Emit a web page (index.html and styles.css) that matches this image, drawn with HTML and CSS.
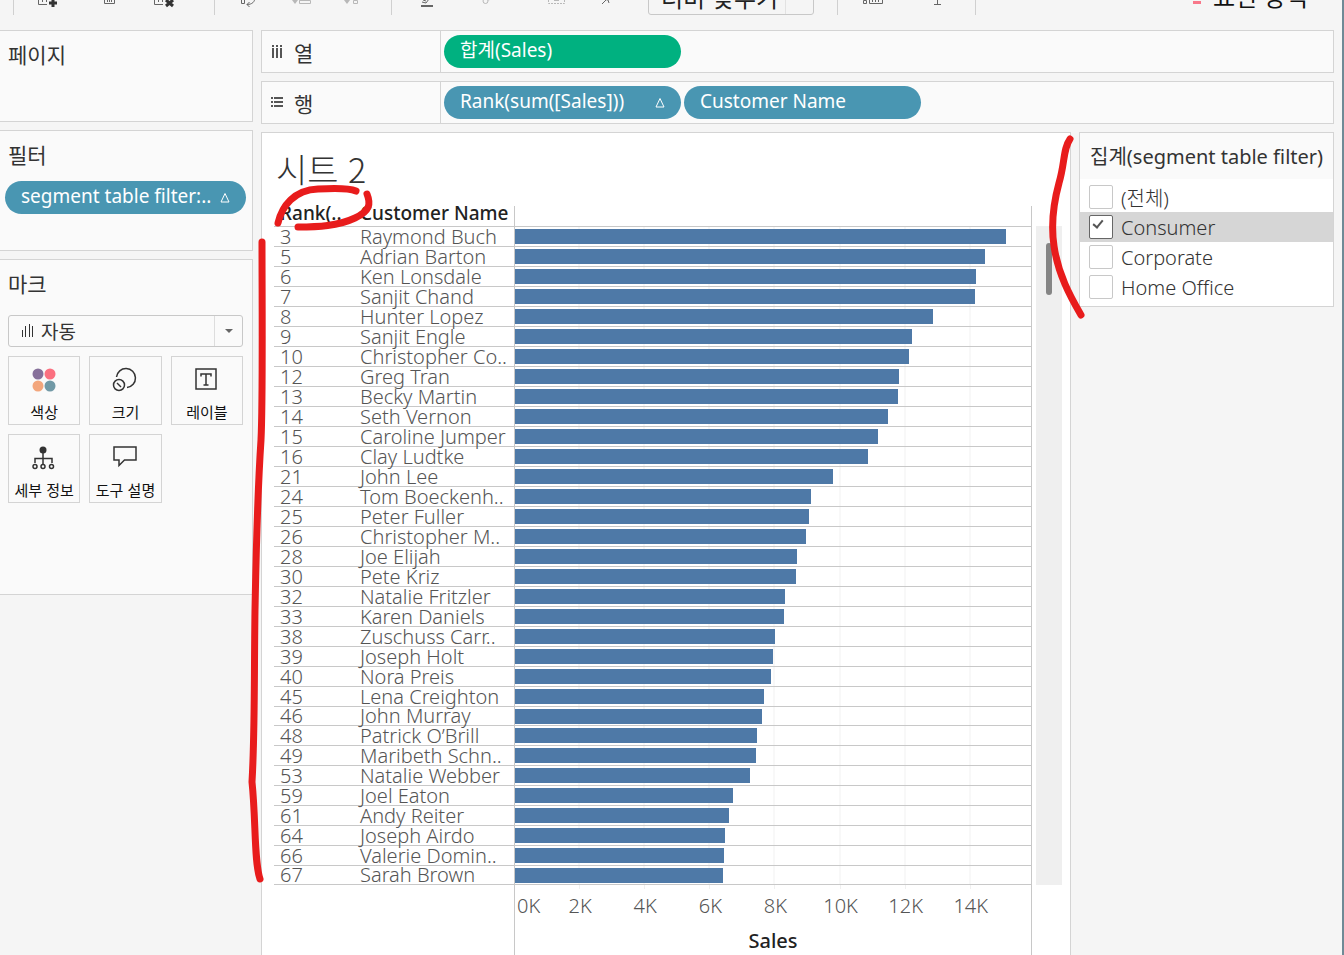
FILE: index.html
```html
<!DOCTYPE html>
<html lang="ko">
<head>
<meta charset="utf-8">
<title>시트 2</title>
<link rel="stylesheet" href="styles.css">
</head>
<body>
<header class="toolbar">
  <span class="sep"></span>
  <div class="tools tools-data">
    <button class="tool" aria-label="새 워크시트"><svg viewBox="0 0 24 24"><path d="M3.500 8v9.500h8.500M7.500 13v2M11.500 13v2" class="ln"/><path d="M18 12v8M14 16h8" class="hv"/></svg></button>
    <button class="tool" aria-label="복제"><svg viewBox="0 0 24 24"><path d="M6.500 8v8.500h10V8M9.500 11v4M11.500 10v5M13.500 11v4" class="ln"/></svg></button>
    <button class="tool" aria-label="시트 지우기"><svg viewBox="0 0 24 24"><path d="M3.500 8v9.500h8.500M7.500 13v2M11.500 13v2" class="ln"/><path d="M15 13l7 6M22 13l-7 6" class="hv"/></svg></button>
  </div>
  <span class="sep"></span>
  <div class="tools tools-sort">
    <button class="tool" aria-label="행과 열 바꾸기"><svg viewBox="0 0 24 24"><path d="M4.500 12.500h3v4h-3zM18 10c0 5-3 7.500-8 7.500M12.500 15L10 17.500l2.500 2.500" class="ln"/></svg></button>
    <button class="tool off" aria-label="오름차순 정렬"><svg viewBox="0 0 24 24"><path d="M3 13h6l-3 4z" class="fl"/><path d="M10.500 13.500h11v3h-11zM10.500 13.500v-5" class="ln"/></svg></button>
    <button class="tool off" aria-label="내림차순 정렬"><svg viewBox="0 0 24 24"><path d="M5 13h6l-3 4z" class="fl"/><path d="M14.500 13.500h4v3h-4z" class="ln"/></svg></button>
  </div>
  <span class="sep"></span>
  <div class="tools tools-view">
    <button class="tool" aria-label="하이라이트"><svg viewBox="0 0 24 24"><path d="M6 19h12" class="hv md"/><path d="M7 15l4 1 3-4M8 13l3 1" class="ln"/></svg></button>
    <button class="tool off" aria-label="그룹"><svg viewBox="0 0 24 24"><circle cx="10.500" cy="14" r="2.500" class="ln"/><path d="M13 13l4-1" class="ln"/></svg></button>
    <button class="tool off" aria-label="레이블 표시"><svg viewBox="0 0 24 24"><path d="M4.500 10v6.500h16V10" class="ln" stroke-dasharray="2 1"/><path d="M10 13.500h5" class="ln"/></svg></button>
    <button class="tool" aria-label="축 고정"><svg viewBox="0 0 24 24"><path d="M8 17l4-4M9 12l5 1M14 13l1 3" class="ln"/></svg></button>
  </div>
  <select class="fit" aria-label="맞춤"><option>너비 맞추기</option></select>
  <span class="sep"></span>
  <div class="tools tools-show">
    <button class="tool" aria-label="카드 표시"><svg viewBox="0 0 24 24"><path d="M2.500 13.500h3v3h-3zM8.500 10v6.500h13V10M11.500 12v3M14.500 11v4M17.500 12v3" class="ln"/></svg></button>
    <button class="tool" aria-label="프레젠테이션"><svg viewBox="0 0 24 24"><path d="M12.500 9v8.500M9 17.500h7" class="ln"/></svg></button>
  </div>
  <span class="sep"></span>
  <button class="showme"><svg viewBox="0 0 8 24"><path d="M0 17h8v3H0z" fill="#f8788a"/></svg>표현 방식</button>
</header>

<div class="workspace">
  <aside class="side">
    <section class="card pages"><h2>페이지</h2></section>
    <section class="card filters">
      <h2>필터</h2>
      <button class="pill">segment table filter:..<svg class="delta" viewBox="0 0 10 11"><path d="M5 1.500L9 10H1z"/></svg></button>
    </section>
    <section class="card marks">
      <h2>마크</h2>
      <div class="marktype">
        <svg viewBox="0 0 12 13"><path d="M.5 6v7M3.500 2v11M7.500 0v13M10.500 2v11"/></svg>
        <select aria-label="마크 유형"><option>자동</option></select>
      </div>
      <div class="markgrid">
        <button class="mark"><svg viewBox="0 0 28 28"><circle cx="8" cy="9" r="5.500" fill="#86709a"/><circle cx="20" cy="9" r="5.500" fill="#fb7080"/><circle cx="8" cy="21" r="5.500" fill="#f3a67c"/><circle cx="20" cy="21" r="5.500" fill="#7199a6"/></svg>색상</button>
        <button class="mark"><svg viewBox="0 0 28 28"><g class="st"><path d="M5.500 12A9.500 9.500 0 1 1 16 22.500"/><circle cx="8" cy="20" r="5.500"/><path d="M6 18l4 4"/></g></svg>크기</button>
        <button class="mark"><svg viewBox="0 0 28 28"><g class="st"><rect x="3" y="4" width="20" height="20"/><path d="M8 11.500V9h10v2.500M13 9v11M10.500 20h5"/></g></svg>레이블</button>
        <button class="mark"><svg viewBox="0 0 28 28"><circle cx="13" cy="7" r="3.500" fill="#333"/><g class="st"><path d="M13 10v11M5 20v-4.500h17V20"/><circle cx="5" cy="23.500" r="2"/><circle cx="13" cy="23.500" r="2"/><circle cx="21.500" cy="23.500" r="2"/></g></svg>세부 정보</button>
        <button class="mark"><svg viewBox="0 0 28 28"><path class="st" d="M3 4h22v13H13.500L8 22.500V17H3z"/></svg>도구 설명</button>
      </div>
    </section>
  </aside>

  <main class="main">
    <section class="shelf">
      <h2><svg viewBox="0 0 12 13"><path d="M2 0v2M6 0v2M10 0v2M2 3v10M6 3v10M10 3v10"/></svg>열</h2>
      <button class="pill green">합계(Sales)</button>
    </section>
    <section class="shelf">
      <h2><svg viewBox="0 0 12 13"><path d="M0 2h2M0 6h2M0 10h2M3 2h9M3 6h9M3 10h9"/></svg>행</h2>
      <button class="pill">Rank(sum([Sales]))<svg class="delta" viewBox="0 0 10 11"><path d="M5 1.500L9 10H1z"/></svg></button>
      <button class="pill">Customer Name</button>
    </section>

    <div class="content">
      <section class="view">
        <h1>시트 2</h1>
        <div class="chart">
          <table class="ranks">
            <colgroup><col class="c-rank"><col class="c-name"><col></colgroup>
            <thead><tr><th>Rank(..</th><th>Customer Name</th><th class="plot"></th></tr></thead>
            <tbody>
            <tr><td>3</td><td>Raymond Buch</td><td class="plot"><div class="bar" style="width:95.2%"></div></td></tr>
            <tr><td>5</td><td>Adrian Barton</td><td class="plot"><div class="bar" style="width:91.1%"></div></td></tr>
            <tr><td>6</td><td>Ken Lonsdale</td><td class="plot"><div class="bar" style="width:89.3%"></div></td></tr>
            <tr><td>7</td><td>Sanjit Chand</td><td class="plot"><div class="bar" style="width:89.1%"></div></td></tr>
            <tr><td>8</td><td>Hunter Lopez</td><td class="plot"><div class="bar" style="width:81%"></div></td></tr>
            <tr><td>9</td><td>Sanjit Engle</td><td class="plot"><div class="bar" style="width:76.9%"></div></td></tr>
            <tr><td>10</td><td>Christopher Co..</td><td class="plot"><div class="bar" style="width:76.4%"></div></td></tr>
            <tr><td>12</td><td>Greg Tran</td><td class="plot"><div class="bar" style="width:74.4%"></div></td></tr>
            <tr><td>13</td><td>Becky Martin</td><td class="plot"><div class="bar" style="width:74.2%"></div></td></tr>
            <tr><td>14</td><td>Seth Vernon</td><td class="plot"><div class="bar" style="width:72.3%"></div></td></tr>
            <tr><td>15</td><td>Caroline Jumper</td><td class="plot"><div class="bar" style="width:70.3%"></div></td></tr>
            <tr><td>16</td><td>Clay Ludtke</td><td class="plot"><div class="bar" style="width:68.4%"></div></td></tr>
            <tr><td>21</td><td>John Lee</td><td class="plot"><div class="bar" style="width:61.6%"></div></td></tr>
            <tr><td>24</td><td>Tom Boeckenh..</td><td class="plot"><div class="bar" style="width:57.4%"></div></td></tr>
            <tr><td>25</td><td>Peter Fuller</td><td class="plot"><div class="bar" style="width:57%"></div></td></tr>
            <tr><td>26</td><td>Christopher M..</td><td class="plot"><div class="bar" style="width:56.4%"></div></td></tr>
            <tr><td>28</td><td>Joe Elijah</td><td class="plot"><div class="bar" style="width:54.7%"></div></td></tr>
            <tr><td>30</td><td>Pete Kriz</td><td class="plot"><div class="bar" style="width:54.5%"></div></td></tr>
            <tr><td>32</td><td>Natalie Fritzler</td><td class="plot"><div class="bar" style="width:52.3%"></div></td></tr>
            <tr><td>33</td><td>Karen Daniels</td><td class="plot"><div class="bar" style="width:52.1%"></div></td></tr>
            <tr><td>38</td><td>Zuschuss Carr..</td><td class="plot"><div class="bar" style="width:50.4%"></div></td></tr>
            <tr><td>39</td><td>Joseph Holt</td><td class="plot"><div class="bar" style="width:50%"></div></td></tr>
            <tr><td>40</td><td>Nora Preis</td><td class="plot"><div class="bar" style="width:49.6%"></div></td></tr>
            <tr><td>45</td><td>Lena Creighton</td><td class="plot"><div class="bar" style="width:48.3%"></div></td></tr>
            <tr class="short"><td>46</td><td>John Murray</td><td class="plot"><div class="bar" style="width:47.9%"></div></td></tr>
            <tr><td>48</td><td>Patrick O’Brill</td><td class="plot"><div class="bar" style="width:46.9%"></div></td></tr>
            <tr><td>49</td><td>Maribeth Schn..</td><td class="plot"><div class="bar" style="width:46.7%"></div></td></tr>
            <tr><td>53</td><td>Natalie Webber</td><td class="plot"><div class="bar" style="width:45.5%"></div></td></tr>
            <tr><td>59</td><td>Joel Eaton</td><td class="plot"><div class="bar" style="width:42.4%"></div></td></tr>
            <tr><td>61</td><td>Andy Reiter</td><td class="plot"><div class="bar" style="width:41.5%"></div></td></tr>
            <tr><td>64</td><td>Joseph Airdo</td><td class="plot"><div class="bar" style="width:40.7%"></div></td></tr>
            <tr><td>66</td><td>Valerie Domin..</td><td class="plot"><div class="bar" style="width:40.5%"></div></td></tr>
            <tr class="short"><td>67</td><td>Sarah Brown</td><td class="plot"><div class="bar" style="width:40.3%"></div></td></tr>
            </tbody>
          </table>
          <div class="scroll"><div class="thumb"></div></div>
          <div class="axis">
            <div class="ticks"></div>
            <div class="labels"><span>0K</span><span>2K</span><span>4K</span><span>6K</span><span>8K</span><span>10K</span><span>12K</span><span>14K</span></div>
            <div class="title">Sales</div>
          </div>
        </div>
      </section>

      <fieldset class="legend">
        <legend>집계(segment table filter)</legend>
        <label><input type="checkbox">(전체)</label>
        <label class="on"><input type="checkbox" checked>Consumer</label>
        <label><input type="checkbox">Corporate</label>
        <label><input type="checkbox">Home Office</label>
      </fieldset>
    </div>
  </main>
</div>

<svg class="ink" width="1100" height="900" viewBox="0 0 1100 900" aria-hidden="true">
  <path d="M278 223C282 206 294 190 318 189C334 188 349 188 356 191"/>
  <path d="M367 194C371 204 370 211 355 218C338 226 318 227 298 227"/>
  <path d="M262 242C262 300 263 400 261 440C257 500 256 560 255 610C254 680 255 730 252 782C256 820 254 862 260 879"/>
  <path d="M1070 139C1063 149 1065 163 1059 183C1053 205 1051 226 1054 246C1058 274 1070 296 1081 315"/>
</svg>
</body>
</html>
```
FILE: styles.css
```css
* { box-sizing: border-box; }
body {
  margin: 0;
  min-height: 100vh;
  display: flex;
  flex-direction: column;
  position: relative;
  background: #f5f5f5;
  border-right: 2px solid #6f8a96;
  color: #333;
  font-family: "Noto Sans", "Noto Sans CJK KR", sans-serif;
  font-size: 20px;
}
h1, h2 { margin: 0; font-weight: 400; }
button, select { font: inherit; color: inherit; padding: 0; margin: 0; background: none; border: 0; }
select { appearance: none; border: 1px solid #c8c8c8; border-radius: 3px; }

/* toolbar */
.toolbar {
  height: 30px;
  overflow: hidden;
  display: flex;
  align-items: flex-end;
  padding: 0 34px 15px 13px;
  font-family: "Noto Sans CJK KR", sans-serif;
  font-size: 24px;
}
.sep { width: 1px; height: 32px; background: #d0d0d0; flex: none; }
.tools { display: grid; padding-bottom: 4px; }
.tools-data { grid-template-columns: 63px 53px 24px; margin: 0 39px 0 21px; }
.tools-sort { grid-template-columns: 52px 50px 24px; margin: 0 28px 0 22px; }
.tools-view { grid-template-columns: 60px 69px 50px 24px; margin: 0 30px 0 23px; }
.tools-show { grid-template-columns: 64px 24px; margin: 0 26px 0 23px; }
.tool { width: 24px; height: 24px; color: #666; }
.tool.off { color: #b8b8b8; }
.tool svg { display: block; width: 24px; height: 24px; }
.ln { fill: none; stroke: currentColor; }
.fl { fill: currentColor; }
.hv { fill: none; stroke: #333; stroke-width: 3; }
.md { stroke: #666; stroke-width: 2; }
.fit {
  width: 166px;
  height: 36px;
  line-height: 34px;
  padding-left: 12px;
  margin-right: 23px;
  color: #222;
  background: linear-gradient(#e2e2e2, #e2e2e2) 136px 0 / 1px 100% no-repeat;
}
.showme { margin-left: auto; padding-bottom: 3px; line-height: 32px; display: flex; align-items: center; gap: 12px; color: #111; }
.showme svg { width: 8px; height: 24px; }

/* layout */
.workspace { flex: 1; display: grid; grid-template-columns: 253px minmax(0, 1fr); gap: 8px; padding-right: 8px; }
.card { border: 1px solid #d4d4d4; border-left: 0; background: #fafafa; padding: 8px; }
.side { display: flex; flex-direction: column; gap: 8px; font-family: "Noto Sans CJK KR", sans-serif; }
.side h2 { font-size: 21px; line-height: 30px; }
.pages { height: 92px; }
.filters { height: 121px; }
.filters .pill { width: 241px; margin: 12px -3px 0; padding-right: 16px; }
.marks { height: 336px; }

.pill {
  display: flex;
  align-items: center;
  justify-content: space-between;
  width: 237px;
  height: 33px;
  padding: 0 16px 3px;
  border-radius: 17px;
  background: #4996b2;
  color: #fff;
  font-size: 19px;
  line-height: 30px;
  text-align: left;
  white-space: nowrap;
  font-family: "Noto Sans", "Noto Sans CJK KR", sans-serif;
}
.green { background: #00b180; }
.delta { width: 10px; height: 11px; margin-top: 3px; fill: none; stroke: #fff; }

.marktype { position: relative; margin-top: 17px; margin-right: 1px; }
.marktype svg { position: absolute; left: 14px; top: 9px; width: 12px; height: 13px; stroke: #333; }
.marktype select {
  display: block;
  width: 100%;
  height: 32px;
  padding-left: 32px;
  font-size: 19px;
  line-height: 30px;
  background: linear-gradient(#ddd, #ddd) calc(100% - 27px) 0 / 1px 100% no-repeat;
}
.marktype::after { content: ""; position: absolute; right: 10px; top: 14px; border: 4px solid transparent; border-top-color: #666; pointer-events: none; }
.markgrid { display: grid; grid-template-columns: repeat(3, 1fr); gap: 9px; margin: 9px 1px 0 0; }
.mark {
  height: 69px;
  border: 1px solid #d4d4d4;
  display: flex;
  flex-direction: column;
  align-items: center;
  justify-content: flex-end;
  font-size: 15px;
  line-height: 24px;
  color: #111;
  white-space: nowrap;
}
.mark svg { width: 28px; height: 28px; margin-bottom: 7px; }
.st { fill: none; stroke: #333; stroke-width: 1.500; }

.main { display: flex; flex-direction: column; gap: 8px; min-width: 0; }
.shelf { height: 43px; border: 1px solid #d4d4d4; background: #fafafa; display: flex; align-items: center; gap: 3px; padding-bottom: 1px; }
.shelf h2 {
  width: 179px;
  align-self: stretch;
  border-right: 1px solid #d4d4d4;
  margin-bottom: -1px;
  padding-left: 9px;
  display: flex;
  align-items: center;
  gap: 11px;
  font-size: 21px;
  font-family: "Noto Sans CJK KR", sans-serif;
}
.shelf svg:not(.delta) { width: 12px; height: 13px; stroke: #555; stroke-width: 2; }

.content { flex: 1; display: grid; grid-template-columns: minmax(0, 1fr) 255px; gap: 8px; align-items: start; }
.view {
  align-self: stretch;
  border: 1px solid #d4d4d4;
  border-bottom: 0;
  background: #fff;
  padding: 14px 8px 0 12px;
  display: flex;
  flex-direction: column;
}
h1 { font-family: "Noto Sans CJK KR", sans-serif; font-weight: 300; font-size: 34px; line-height: 44px; padding: 0 2px; margin-bottom: 15px; }

/* ranked bars */
.chart { flex: 1; display: grid; grid-template-columns: minmax(0, 1fr) 26px; grid-template-rows: auto 1fr; column-gap: 4px; }
.ranks { width: 100%; table-layout: fixed; border-collapse: collapse; font-weight: 300; color: #555; }
.c-rank { width: 80px; }
.c-name { width: 160px; }
.ranks tr { height: 20px; }
.ranks .short { height: 19px; }
.ranks th, .ranks td { padding: 0 0 0 6px; line-height: 18px; text-align: left; white-space: nowrap; border-bottom: 1px solid #c8c8c8; }
.ranks th { font-weight: 500; color: #222; font-size: 19px; line-height: 14px; padding-bottom: 6px; }
.ranks .plot { padding: 0; border-left: 1px solid #c8c8c8; border-right: 1px solid #c8c8c8; }
td.plot, .ticks { background: repeating-linear-gradient(to right, transparent 0 calc(12.620% - 1px), #f0f0f0 calc(12.620% - 1px) 12.620%); }
.bar { height: 15px; background: #4e79a7; }
.scroll { background: #efefef; margin-top: 20px; padding: 17px 10px; }
.thumb { width: 6px; height: 52px; border-radius: 3px; background: #858585; }
.axis { margin-left: 240px; border-left: 1px solid #c8c8c8; border-right: 1px solid #c8c8c8; }
.ticks { height: 4px; }
.labels { display: flex; font-weight: 300; color: #555; line-height: 34px; }
.labels span { width: 12.620%; text-align: center; flex: none; }
.labels span:first-child { width: 6.310%; text-align: left; padding-left: 2px; }
.title { font-weight: 500; font-size: 20px; color: #222; line-height: 36px; text-align: center; }

/* filter list */
.legend { margin: 0; padding: 0; border: 1px solid #d4d4d4; background: #fff; min-width: 0; height: 175px; }
.legend legend { float: left; width: 100%; height: 46px; margin-bottom: 3px; padding: 0 10px; background: #fafafa; font-size: 20px; line-height: 48px; white-space: nowrap; }
.legend label { clear: both; display: flex; align-items: center; gap: 8px; height: 30px; padding-left: 9px; font-weight: 300; }
.legend .on { background: #d6d6d6; }
.legend input { appearance: none; width: 24px; height: 24px; margin: 0; border: 1px solid #c8c8c8; border-radius: 2px; background: #fff; position: relative; }
.legend input:checked { border-color: #666; }
.legend input:checked::after { content: ""; position: absolute; left: 5px; top: 2px; width: 4px; height: 8px; border: solid #555; border-width: 0 2px 2px 0; transform: rotate(40deg); }

.ink { position: absolute; left: 0; top: 0; fill: none; stroke: #e81c1c; stroke-width: 7; stroke-linecap: round; stroke-linejoin: round; pointer-events: none; }
```
